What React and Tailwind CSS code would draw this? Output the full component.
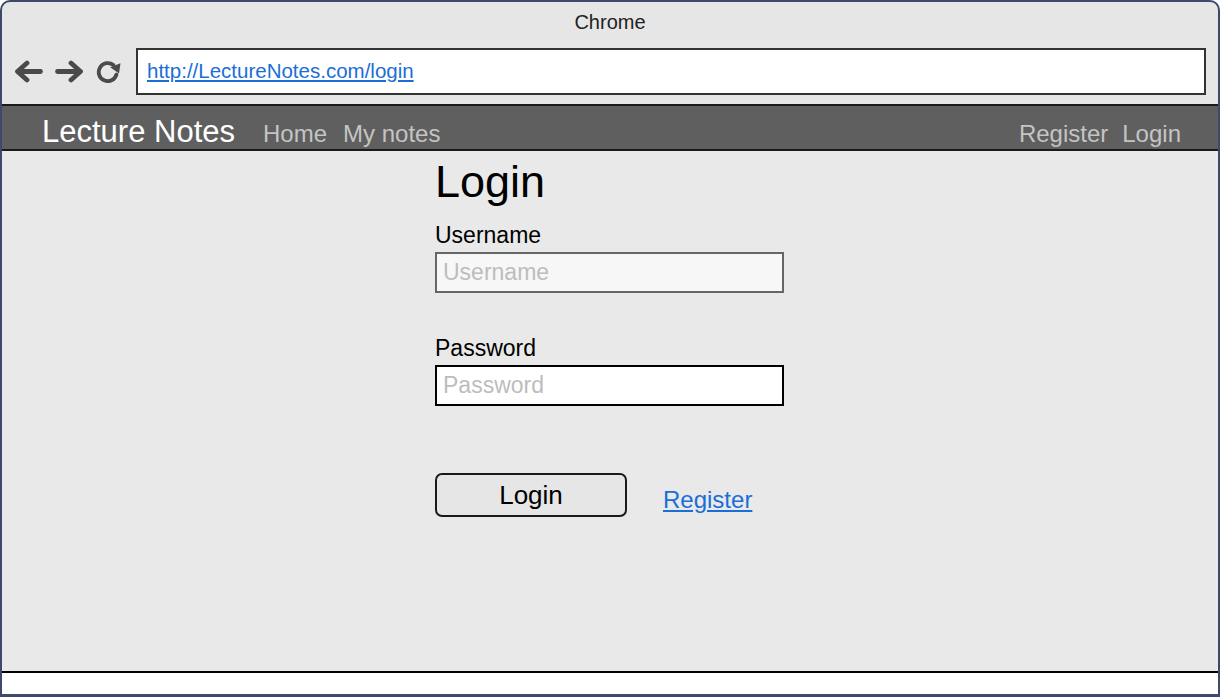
import { useState } from 'react'

function BackIcon() {
  return (
    <svg width="29" height="23" viewBox="0 0 29 23" fill="none">
      <path d="M26.5 11.5H4M13 3L3.5 11.5L13 20" stroke="#4a4a4a" strokeWidth="4.8" strokeLinecap="round" strokeLinejoin="round" />
    </svg>
  )
}

function ForwardIcon() {
  return (
    <svg width="29" height="23" viewBox="0 0 29 23" fill="none">
      <path d="M2.5 11.5H25M16 3L25.5 11.5L16 20" stroke="#4a4a4a" strokeWidth="4.8" strokeLinecap="round" strokeLinejoin="round" />
    </svg>
  )
}

function RefreshIcon() {
  return (
    <svg width="27" height="23" viewBox="0 0 27 23" fill="none">
      <path d="M17.4 5.1A9 9 0 1 0 20.4 14.6" stroke="#4a4a4a" strokeWidth="3.8" strokeLinecap="round" />
      <polygon points="14.2,7.2 24.5,3.2 23,13.5" fill="#4a4a4a" />
    </svg>
  )
}

export default function App() {
  const [username, setUsername] = useState('')
  const [password, setPassword] = useState('')

  return (
    <div className="w-[1220px] h-[697px] flex flex-col overflow-hidden rounded-t-[10px] border-2 border-b-[3px] border-[#3d4a6b] bg-[#e6e6e6] font-['Liberation_Sans',Arial,sans-serif]">
      {/* browser chrome */}
      <div className="h-[102px] shrink-0">
        <div className="h-[40px] flex items-center justify-center text-[20px] text-[#222]">
          Chrome
        </div>
        <div className="mt-[6px] h-[47px] flex items-center pr-[12px]">
          <div className="flex items-center pl-[12px] w-[134px]">
            <BackIcon />
            <div className="ml-[12px]">
              <ForwardIcon />
            </div>
            <div className="ml-[12px]">
              <RefreshIcon />
            </div>
          </div>
          <div className="flex-1 h-full flex items-center border-2 border-[#333] bg-white pl-[9px]">
            <a href="#" className="text-[20.5px] text-[#1b6ed6] underline">
              http://LectureNotes.com/login
            </a>
          </div>
        </div>
      </div>

      {/* navbar */}
      <div className="h-[47px] shrink-0 flex items-baseline justify-between border-y-2 border-[#1a1a1a] bg-[#5f5f5f] pl-[40px] pr-[37px] pt-[3px]">
        <div className="flex items-baseline">
          <span className="text-[31px] text-white">Lecture Notes</span>
          <span className="ml-[28px] text-[24px] text-[#c4c4c4]">Home</span>
          <span className="ml-[16px] text-[24px] text-[#c4c4c4]">My notes</span>
        </div>
        <div className="flex items-baseline gap-[14px] text-[24px] text-[#c4c4c4]">
          <span>Register</span>
          <span>Login</span>
        </div>
      </div>

      {/* content */}
      <div className="flex-1 bg-[#e9e9e9]">
        <div className="ml-[433px] w-[349px] pt-[8px]">
          <h1 className="text-[45px] leading-none text-black">Login</h1>

          <label className="block mt-[20px] text-[23px] leading-none text-black">Username</label>
          <input
            value={username}
            onChange={(e) => setUsername(e.target.value)}
            placeholder="Username"
            className="mt-[5px] block w-full h-[41px] border-2 border-[#666] bg-[#f7f7f7] pl-[6px] text-[23px] outline-none placeholder:text-[#bdbdbd]"
          />

          <label className="block mt-[44px] text-[23px] leading-none text-black">Password</label>
          <input
            type="password"
            value={password}
            onChange={(e) => setPassword(e.target.value)}
            placeholder="Password"
            className="mt-[5px] block w-full h-[41px] border-2 border-black bg-white pl-[6px] text-[23px] outline-none placeholder:text-[#bdbdbd]"
          />

          <div className="mt-[67px] flex items-start">
            <button className="w-[192px] h-[44px] flex items-center justify-center rounded-[7px] border-2 border-[#1a1a1a] bg-[#e6e6e6] text-[26px] leading-none text-black">
              Login
            </button>
            <a href="#" className="ml-[36px] mt-[15px] text-[24px] leading-none text-[#1b6ed6] underline">
              Register
            </a>
          </div>
        </div>
      </div>

      {/* status strip */}
      <div className="h-[23px] shrink-0 border-t-2 border-black bg-white" />
    </div>
  )
}
